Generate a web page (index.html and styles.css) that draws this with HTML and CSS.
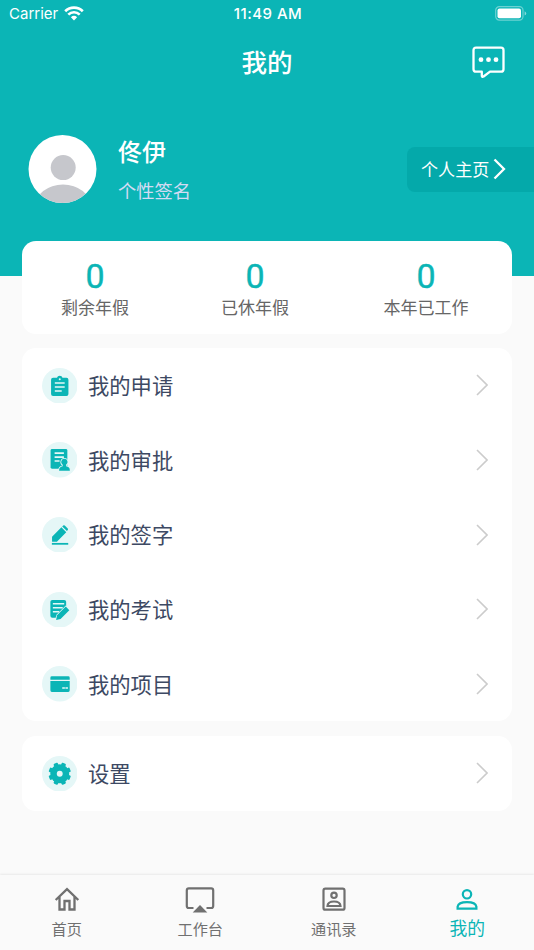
FILE: index.html
```html
<!DOCTYPE html>
<html lang="zh-CN">
<head>
<meta charset="utf-8">
<title>我的</title>
<link rel="stylesheet" href="styles.css">
</head>
<body>
<div class="screen">
  <header class="header">
    <div class="status">
      <div class="carrier"><span>Carrier</span>
        <svg width="20" height="15" viewBox="0 0 20 15"><g fill="none" stroke="#fff" stroke-width="2.7"><path d="M1.2 5.2a12.6 12.6 0 0 1 17.6 0"/><path d="M4.3 8.6a8.1 8.1 0 0 1 11.4 0"/></g><path fill="#fff" d="M10 14.5 6.9 11.3a4.5 4.5 0 0 1 6.2 0z"/></svg>
      </div>
      <div class="time">11:49 AM</div>
      <svg class="battery" width="32" height="15" viewBox="0 0 32 15"><rect x=".7" y=".7" width="27.3" height="13.4" rx="3.6" fill="none" stroke="#fff" stroke-opacity=".4" stroke-width="1.2"/><rect x="2.5" y="2.5" width="23.5" height="9.8" rx="2" fill="#fff"/><path d="M29.6 5.2q1.600.8 1.600 2.200t-1.600 2.200z" fill="#fff" fill-opacity=".5"/></svg>
    </div>
    <div class="titlebar">
      <h1>我的</h1>
      <svg class="message" width="33" height="33" viewBox="0 0 33 33"><path d="M4 1.700h25q2.500 0 2.500 2.500v19q0 2.500-2.500 2.500H18l-6.400 4.800q-1.800 1-1.800-1v-3.800H4q-2.500 0-2.500-2.500v-19Q1.500 1.700 4 1.700z" fill="none" stroke="#fff" stroke-width="2.300" stroke-linejoin="round"/><g fill="#fff"><circle cx="9" cy="13.700" r="2.400"/><circle cx="16.500" cy="13.700" r="2.400"/><circle cx="24" cy="13.700" r="2.400"/></g></svg>
    </div>
    <div class="profile">
      <svg class="avatar" width="69" height="68" viewBox="0 0 69 68"><defs><clipPath id="face"><circle cx="34.500" cy="34" r="34"/></clipPath></defs><circle cx="34.500" cy="34" r="34" fill="#fff"/><g clip-path="url(#face)" fill="#c6c7cc"><circle cx="35.200" cy="32.600" r="12.500"/><ellipse cx="35" cy="72" rx="28" ry="22.500"/></g></svg>
      <div class="who"><div class="name">佟伊</div><div class="sign">个性签名</div></div>
      <div class="home"><span>个人主页</span><svg width="13" height="22" viewBox="0 0 13 22"><path d="m1.500 1.500 9.500 9.500-9.500 9.500" fill="none" stroke="#fff" stroke-width="2.300"/></svg></div>
    </div>
  </header>

  <main>
    <section class="card stats">
      <div class="stat"><b>0</b><span>剩余年假</span></div>
      <div class="stat"><b>0</b><span>已休年假</span></div>
      <div class="stat"><b>0</b><span>本年已工作</span></div>
    </section>

    <section class="card menu">
      <div class="row">
        <svg class="icon" viewBox="0 0 36 36"><circle cx="18" cy="18" r="18"/><path class="ink" d="M11.200 10h4a2.900 2.900 0 0 1 5.600 0h4q2 0 2 2v14.300q0 2-2 2H11.200q-2 0-2-2V12q0-2 2-2z"/><path class="cut" d="M13 15.200h10M13 19.200h10M13 23.300h7"/><circle cx="18" cy="11.300" r="1"/></svg>
        <span>我的申请</span><svg class="arrow" viewBox="0 0 12 22"><path d="m1 1 10 10L1 21"/></svg>
      </div>
      <div class="row">
        <svg class="icon" viewBox="0 0 36 36"><circle cx="18" cy="18" r="18"/><path class="ink" d="M10.200 7h14q1.500 0 1.500 1.500V27H10.200q-1.500 0-1.500-1.500v-17Q8.700 7 10.200 7z"/><path class="cut" d="M12.800 11.300h9.400M12.800 15.300h9.400M12.800 19.300h5"/><path class="ink halo" d="M22.700 17a3.300 3.300 0 0 1 1.700 6.100v1.600q3.800.8 3.800 3.600v.9H17.400v-.9q0-2.800 3.600-3.600v-1.600A3.300 3.300 0 0 1 22.700 17z"/></svg>
        <span>我的审批</span><svg class="arrow" viewBox="0 0 12 22"><path d="m1 1 10 10L1 21"/></svg>
      </div>
      <div class="row">
        <svg class="icon" viewBox="0 0 36 36"><circle cx="18" cy="18" r="18"/><path class="ink" d="M10.200 25v-5l9.500-9.500 4.900 4.900-9.500 9.600zM20.500 9.700l1-1q.8-.7 1.600 0l3 3q.7.800 0 1.600l-.8.900z"/><path class="ink" d="M10 26.300h16.600v1.800H10z"/></svg>
        <span>我的签字</span><svg class="arrow" viewBox="0 0 12 22"><path d="m1 1 10 10L1 21"/></svg>
      </div>
      <div class="row">
        <svg class="icon" viewBox="0 0 36 36"><circle cx="18" cy="18" r="18"/><path class="ink" d="M10.500 8h12q2 0 2 2v6.500l-8.300 9.500h-5.700q-2 0-2-2V10q0-2 2-2z"/><path class="cut" d="M11 12h11.500M11 16h10M11 20h6.500"/><path class="ink halo" d="m14.300 28.300.9-4.600 8.900-8.900 3.600 3.600-8.900 8.900z"/></svg>
        <span>我的考试</span><svg class="arrow" viewBox="0 0 12 22"><path d="m1 1 10 10L1 21"/></svg>
      </div>
      <div class="row">
        <svg class="icon" viewBox="0 0 36 36"><circle cx="18" cy="18" r="18"/><path class="ink" d="M10 10.400h16.600q1.500 0 1.500 1.500v2H8.500v-2q0-1.500 1.500-1.500zM8.500 15.300h19.600v9.400q0 1.600-1.500 1.600H10q-1.500 0-1.500-1.600z"/><path class="slit" d="M20.500 22.300h2.700M23.700 22.300h2.600"/></svg>
        <span>我的项目</span><svg class="arrow" viewBox="0 0 12 22"><path d="m1 1 10 10L1 21"/></svg>
      </div>
    </section>

    <section class="card menu">
      <div class="row">
        <svg class="icon" viewBox="0 0 36 36"><circle cx="18" cy="18" r="18"/><g class="ink"><circle cx="18" cy="18" r="9.600"/><g id="teeth"><rect x="15.700" y="6.600" width="4.600" height="22.800" rx="1" transform="rotate(22.500 18 18)"/><rect x="15.700" y="6.600" width="4.600" height="22.800" rx="1" transform="rotate(67.500 18 18)"/></g><use href="#teeth" transform="rotate(90 18 18)"/></g><circle cx="18" cy="18" r="3"/></svg>
        <span>设置</span><svg class="arrow" viewBox="0 0 12 22"><path d="m1 1 10 10L1 21"/></svg>
      </div>
    </section>
  </main>

  <nav class="tabs">
    <div class="tab"><svg viewBox="0 0 32 32"><path d="M4.700 17 16 6.200 27.300 17M8.500 14v12.500h5V18h5v8.500h5V14" fill="none" stroke="currentColor" stroke-width="2.300"/></svg><span>首页</span></div>
    <div class="tab"><svg viewBox="0 0 32 32"><path d="M9.500 25H4.800q-2 0-2-2V7.400q0-2 2-2h22.400q2 0 2 2V23q0 2-2 2h-4.700" fill="none" stroke="currentColor" stroke-width="2.200"/><path d="m16 22 7.300 7.500H8.700z" fill="currentColor"/></svg><span>工作台</span></div>
    <div class="tab"><svg viewBox="0 0 32 32"><g fill="none" stroke="currentColor" stroke-width="2.200"><rect x="5.500" y="5.700" width="21" height="21" rx="1.800"/><circle cx="16" cy="12.300" r="2.700"/><path d="M9.500 23q.3-4.500 6.500-4.500t6.500 4.500z"/></g></svg><span>通讯录</span></div>
    <div class="tab active"><svg viewBox="0 0 32 32"><g fill="none" stroke="currentColor" stroke-width="2.200"><circle cx="16" cy="11.300" r="4.200"/><path d="M6.600 25.700v-2q.8-4.500 9.400-4.500t9.400 4.500v2z"/></g></svg><span>我的</span></div>
  </nav>
</div>
</body>
</html>
```
FILE: styles.css
```css
* { box-sizing: border-box; }
body {
  margin: 0;
  background: #fafafa;
  font-family: "Noto Sans CJK SC", sans-serif;
}
svg { display: block; flex: none; }
.screen {
  width: 534px;
  height: 950px;
  display: flex;
  flex-direction: column;
  overflow: hidden;
}
.header {
  height: 276px;
  flex: none;
  background: #0bb5b6;
  color: #fff;
}
.status {
  height: 28px;
  padding: 0 7px 0 9px;
  display: grid;
  grid-template-columns: 1fr auto 1fr;
  align-items: center;
  font: 15px/28px Inter, sans-serif;
}
.carrier { display: flex; align-items: center; gap: 5.500px; }
.carrier svg { margin-top: -2px; }
.time { font-weight: 500; font-size: 15px; letter-spacing: .5px; }
.battery { justify-self: end; margin-top: -1px; }
.titlebar {
  height: 68px;
  padding: 0 29px;
  display: grid;
  grid-template-columns: 1fr auto 1fr;
  align-items: center;
}
h1 {
  grid-column: 2;
  margin: -2px 0 0;
  font-size: 25.500px;
  line-height: 36px;
  font-weight: 500;
}
.message { justify-self: end; }
.profile {
  height: 68px;
  margin-top: 39px;
  padding-left: 28px;
  display: flex;
  align-items: center;
}
.who { margin: -1px 0 0 21px; flex: 1; }
.name { font-size: 24px; line-height: 36px; font-weight: 500; }
.sign { margin-top: 7px; font-size: 18.300px; line-height: 28px; color: #d3dbf3; }
.home {
  width: 127px;
  height: 45px;
  padding-left: 14px;
  display: flex;
  align-items: center;
  gap: 4px;
  border-radius: 8px 0 0 8px;
  background: #04a9aa;
  font-size: 17.100px;
}
.home span { margin-top: -1px; }
main {
  margin: -35.500px 22px 0;
  display: flex;
  flex-direction: column;
  gap: 14px;
  flex: 1;
}
.card { background: #fff; border-radius: 14px; }
.stats {
  height: 93.500px;
  padding: 18px 43.500px 0 39px;
  display: flex;
}
.stats .stat:nth-child(2) { margin: 0 94.500px 0 92px; }
.stat { display: flex; flex-direction: column; align-items: center; }
.stat b {
  color: #0bb5b6;
  font: 400 34px/34px Roboto, sans-serif;
  -webkit-text-stroke: .4px;
}
.stat span { margin-top: 1px; color: #666; font-size: 17px; line-height: 26px; }
.row {
  height: 74.700px;
  padding: 0 24px 0 19.500px;
  display: flex;
  align-items: center;
}
.menu + .menu { margin-top: .5px; }
.row span { flex: 1; margin: -1px 0 0 11px; color: #3d4963; font-size: 21.300px; line-height: 32px; }
.icon { width: 35.500px; height: 35.500px; fill: #e5f7f7; }
.icon .ink { fill: #0bb5b6; }
.cut, .slit { fill: none; stroke: #e5f7f7; stroke-width: 1.600; }
.halo { stroke: #e5f7f7; stroke-width: 1.600; paint-order: stroke; }
.arrow { width: 12px; height: 22px; fill: none; stroke: #ccc; stroke-width: 1.600; }
.tabs {
  height: 75px;
  flex: none;
  display: grid;
  grid-template-columns: repeat(4, 1fr);
  color: #707070;
  box-shadow: 0 -1px 2px #00000012;
}
.tab { padding-top: 8px; display: flex; flex-direction: column; align-items: center; }
.tab svg { width: 32px; height: 32px; }
.tab span { margin-top: 2px; font-size: 15.200px; line-height: 22px; }
.tab.active { color: #0bb5b6; }
.tab.active span { margin-top: -1px; font-size: 17.800px; line-height: 26px; }
```
